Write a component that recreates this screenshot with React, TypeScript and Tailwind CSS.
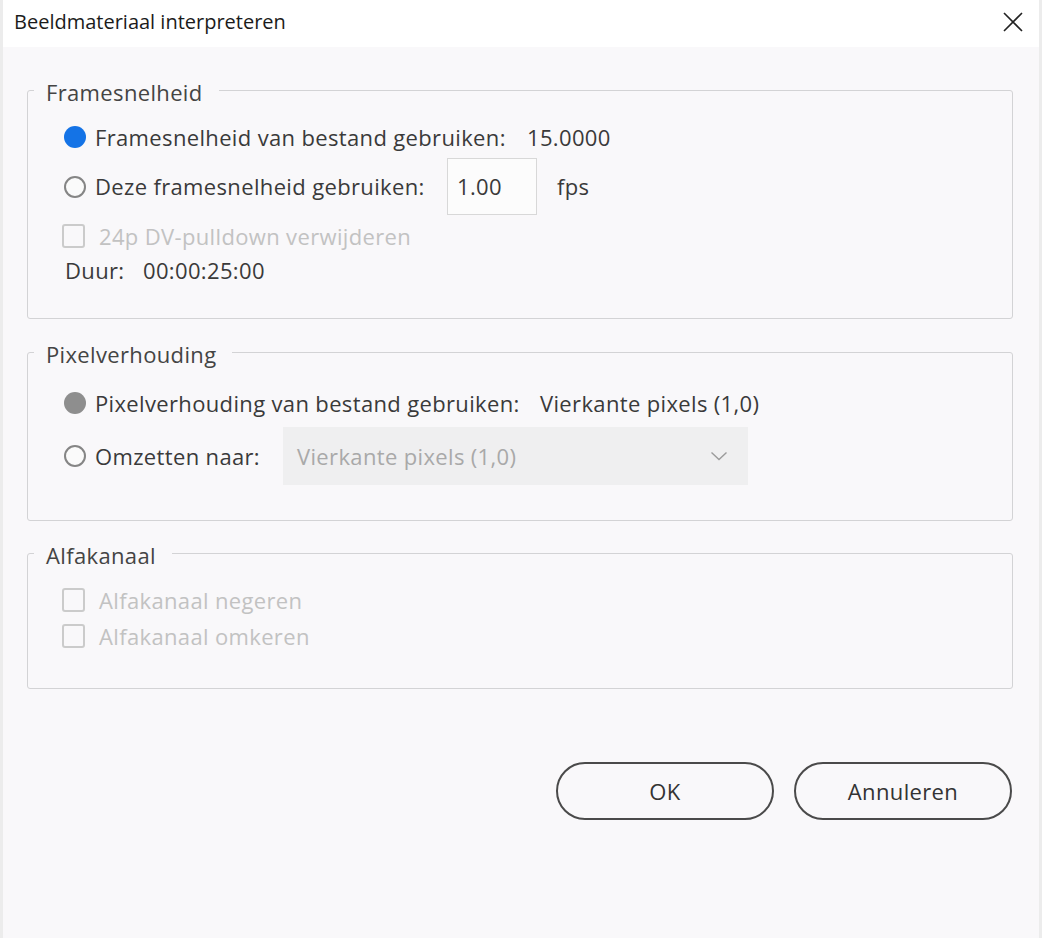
import React from "react";

const FONT = { fontFamily: '"Open Sans", "Noto Sans", sans-serif' };

function Radio({ state }: { state: "blue" | "gray" | "off" }) {
  if (state === "blue") {
    return <span className="block w-[22px] h-[22px] rounded-full bg-[#1473e6] shrink-0" />;
  }
  if (state === "gray") {
    return <span className="block w-[22px] h-[22px] rounded-full bg-[#8e8e8e] shrink-0" />;
  }
  return <span className="block w-[22px] h-[22px] rounded-full border-2 border-[#858585] bg-[#fafafa] shrink-0" />;
}

function DisabledCheck({ label }: { label: string }) {
  return (
    <div className="flex items-center h-[26px]">
      <span className="block w-[23px] h-[24px] rounded-[3px] border-2 border-[#cbcbcb] shrink-0" />
      <span className="ml-[14px] text-[#c2c2c2]">{label}</span>
    </div>
  );
}

function Group({
  title,
  className,
  children,
}: {
  title: string;
  className: string;
  children: React.ReactNode;
}) {
  return (
    <fieldset className={`border border-[#d3d3d5] rounded-[3px] pl-[34px] pr-[6px] min-w-0 ${className}`}>
      <legend className="ml-[-28px] pl-[12px] pr-[16px] pt-[4px] h-[32px] leading-[28px] text-[#444]">
        {title}
      </legend>
      {children}
    </fieldset>
  );
}

export default function App() {
  return (
    <div
      className="w-[1042px] h-[938px] bg-[#f9f8fa] text-[22px] tracking-[0.35px] text-[#3a3a3a] overflow-hidden border-l-[3px] border-r-[3px] border-[#ececec]"
      style={FONT}
    >
      {/* Title bar */}
      <div className="h-[47px] bg-white flex items-center justify-between pl-[14px] pr-[18px] ml-[-3px] mr-[-3px] tracking-normal">
        <span className="text-[20px] text-[#1b1b1b] pb-[4px]">Beeldmateriaal interpreteren</span>
        <svg width="22" height="22" viewBox="0 0 22 22" className="mb-[4px]">
          <path d="M2 2 L20 20 M20 2 L2 20" stroke="#222" strokeWidth="1.6" fill="none" />
        </svg>
      </div>

      <div className="pl-[24px] pr-[26px]">
        {/* Framesnelheid */}
        <Group title="Framesnelheid" className="mt-[27px] pb-[35px]">
          <div className="pt-[13px] flex items-center h-[49px]">
            <span className="ml-[2px]">
              <Radio state="blue" />
            </span>
            <span className="ml-[9px] w-[432px] shrink-0">Framesnelheid van bestand gebruiken:</span>
            <span>15.0000</span>
          </div>
          <div className="mt-[3px] flex items-center h-[57px]">
            <span className="ml-[2px]">
              <Radio state="off" />
            </span>
            <span className="ml-[9px] w-[352px] shrink-0">Deze framesnelheid gebruiken:</span>
            <div className="w-[90px] h-[57px] border border-[#d8d8d8] bg-[#fcfcfc] flex items-center pl-[9px]">
              1.00
            </div>
            <span className="ml-[20px]">fps</span>
          </div>
          <div className="mt-[8px]">
            <DisabledCheck label="24p DV-pulldown verwijderen" />
          </div>
          <div className="mt-[8px] flex items-center h-[26px]">
            <span className="ml-[3px] w-[78px]">Duur:</span>
            <span>00:00:25:00</span>
          </div>
        </Group>

        {/* Pixelverhouding */}
        <Group title="Pixelverhouding" className="mt-[17px] pb-[35px]">
          <div className="mt-[17px] flex items-center h-[36px]">
            <span className="ml-[2px]">
              <Radio state="gray" />
            </span>
            <span className="ml-[9px] w-[445px] shrink-0">Pixelverhouding van bestand gebruiken:</span>
            <span>Vierkante pixels (1,0)</span>
          </div>
          <div className="mt-[6px] flex items-center h-[58px]">
            <span className="ml-[2px]">
              <Radio state="off" />
            </span>
            <span className="ml-[9px] w-[188px] shrink-0">Omzetten naar:</span>
            <div className="w-[465px] h-[58px] bg-[#efeff0] flex items-center justify-between pl-[14px] pr-[20px] text-[#a9a9a9]">
              <span>Vierkante pixels (1,0)</span>
              <svg width="18" height="10" viewBox="0 0 18 10">
                <path d="M1.5 1.5 L9 8.5 L16.5 1.5" stroke="#9b9b9b" strokeWidth="1.4" fill="none" />
              </svg>
            </div>
          </div>
        </Group>

        {/* Alfakanaal */}
        <Group title="Alfakanaal" className="mt-[16px] pb-[39px]">
          <div className="mt-[18px]">
            <DisabledCheck label="Alfakanaal negeren" />
          </div>
          <div className="mt-[10px]">
            <DisabledCheck label="Alfakanaal omkeren" />
          </div>
        </Group>

        {/* Buttons */}
        <div className="mt-[73px] flex justify-end gap-[20px] pr-[1px]">
          <button className="w-[218px] h-[58px] rounded-full border-2 border-[#4a4a4a] text-[#333] bg-transparent">
            OK
          </button>
          <button className="w-[218px] h-[58px] rounded-full border-2 border-[#4a4a4a] text-[#333] bg-transparent">
            Annuleren
          </button>
        </div>
      </div>
    </div>
  );
}
